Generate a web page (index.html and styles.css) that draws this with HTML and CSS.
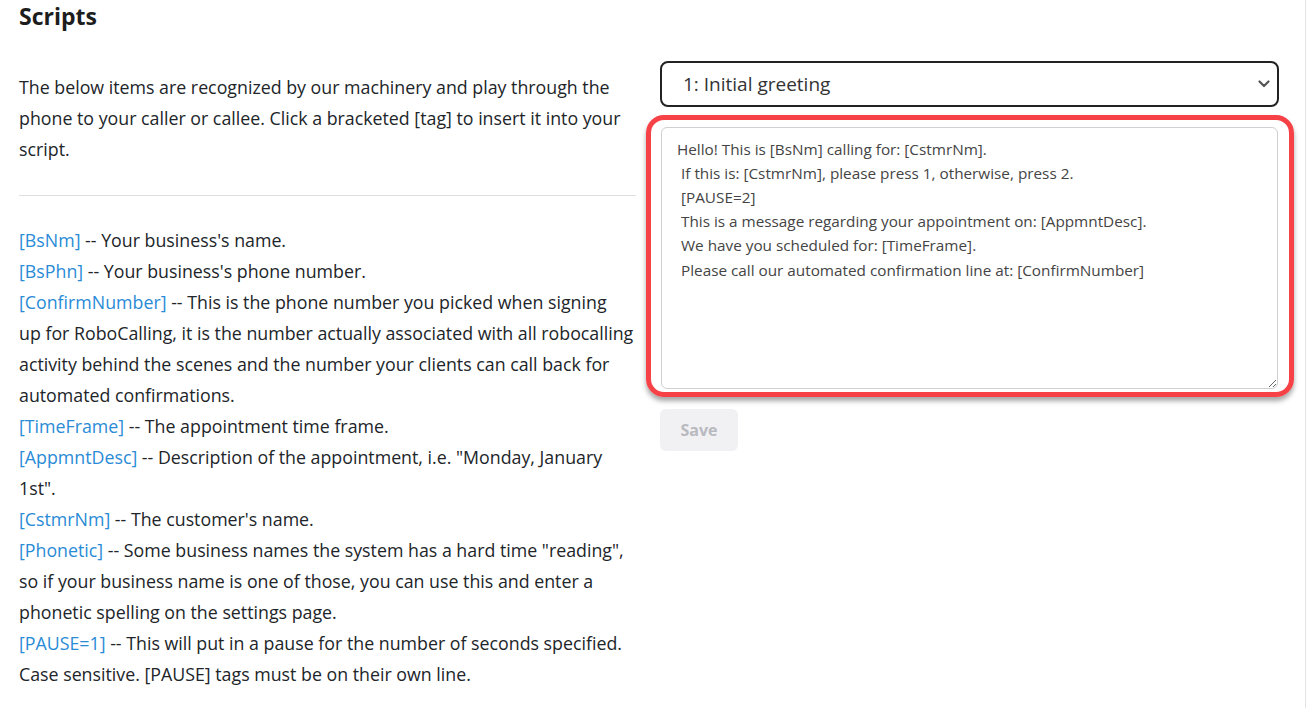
FILE: index.html
```html
<!DOCTYPE html>
<html lang="en">

<head>
    <meta charset="UTF-8">
    <meta name="viewport" content="width=device-width, initial-scale=1.0">
    <title>Scripts</title>
    <link rel="stylesheet" href="styles.css">
</head>

<body>
    <div class="page">
        <h2 class="page-title">Scripts</h2>

        <div class="row">
            <div class="col">
                <p class="intro">The below items are recognized by our machinery and play through the phone to your caller or callee. Click a bracketed [tag] to insert it into your script.</p>
                <hr>
                <ul class="tags">
                    <li><a href="#">[BsNm]</a> -- Your business's name.</li>
                    <li><a href="#">[BsPhn]</a> -- Your business's phone number.</li>
                    <li><a href="#">[ConfirmNumber]</a> -- This is the phone number you picked when signing up&nbsp;for RoboCalling, it is the number actually associated with all robocalling activity behind the scenes and the number your clients can call back for automated confirmations.</li>
                    <li><a href="#">[TimeFrame]</a> -- The appointment time frame.</li>
                    <li><a href="#">[AppmntDesc]</a> -- Description of the appointment, i.e. "Monday, January 1st".</li>
                    <li><a href="#">[CstmrNm]</a> -- The customer's name.</li>
                    <li><a href="#">[Phonetic]</a> -- Some business names the system has a hard time "reading", so if your business name is one of those, you can use this and enter a phonetic spelling on the settings page.</li>
                    <li><a href="#">[PAUSE=1]</a> -- This will put in a pause for the number of seconds specified. Case sensitive. [PAUSE] tags must be on their own line.</li>
                </ul>
            </div>

            <div class="col">
                <select id="scriptSelect">
                    <option>1: Initial greeting</option>
                    <option>2: Confirmed</option>
                    <option>3: Cancelled</option>
                </select>

                <div class="highlight">
                    <textarea id="scriptText">Hello! This is [BsNm] calling for: [CstmrNm].
 If this is: [CstmrNm], please press 1, otherwise, press 2.
 [PAUSE=2]
 This is a message regarding your appointment on: [AppmntDesc].
 We have you scheduled for: [TimeFrame].
 Please call our automated confirmation line at: [ConfirmNumber]</textarea>
                </div>

                <button class="save-btn" disabled>Save</button>
            </div>
        </div>
    </div>
</body>

</html>
```

FILE: styles.css
```css
html {
    height: 100%;
}

body {
    font-family: "Open Sans", sans-serif;
    font-size: 17.8px;
    line-height: 31px;
    color: #212529;
    background-color: #fff;
    margin: 0;
    min-height: 100%;
    border-right: 1px solid #e4e4e4;
    width: 1306px;
    box-sizing: border-box;
}

.page {
    padding: 0 0 0 19px;
    width: 1260px;
}

.page-title {
    font-size: 23px;
    font-weight: 700;
    line-height: 1.2;
    margin: 3px 0 0;
    color: #1d1d1d;
}

.row {
    display: grid;
    grid-template-columns: 617px 619px;
    column-gap: 24px;
    margin-top: 30px;
}

.intro {
    margin: 11px 0 0;
}

hr {
    border: 0;
    border-top: 1px solid #dedede;
    margin: 30px 0 29px;
}

.tags {
    list-style: none;
    margin: 0;
    padding: 0;
}

.tags a {
    color: #2a8bd6;
    text-decoration: none;
}

select {
    display: block;
    width: 100%;
    height: 46px;
    padding: 0 21px;
    font-family: "Open Sans", sans-serif;
    font-size: 19px;
    color: #333;
    background-color: #fff;
    border: 2px solid #222;
    border-radius: 8px;
    appearance: none;
    background-image: url("data:image/svg+xml,%3Csvg xmlns='http://www.w3.org/2000/svg' width='12' height='8' viewBox='0 0 12 8'%3E%3Cpath d='M1.5 1.5 6 6l4.5-4.5' fill='none' stroke='%23555' stroke-width='2.2' stroke-linecap='round' stroke-linejoin='round'/%3E%3C/svg%3E");
    background-repeat: no-repeat;
    background-position: right 7px center;
}

.highlight {
    margin: 8px -15px 0 -14px;
    padding: 7px 11px 3px 10px;
    border: 5px solid #f64247;
    border-radius: 18px;
    box-shadow: 0 4px 5px rgba(0, 0, 0, 0.35);
}

textarea {
    display: block;
    width: 100%;
    height: 262px;
    box-sizing: border-box;
    padding: 9px 15px;
    font-family: "Open Sans", sans-serif;
    font-size: 15.3px;
    line-height: 24.2px;
    color: #444;
    border: 1px solid #cfcfd4;
    border-radius: 6px;
    resize: vertical;
}

.save-btn {
    display: block;
    margin-top: 12px;
    width: 78px;
    height: 42px;
    font-family: "Open Sans", sans-serif;
    font-size: 16px;
    font-weight: 700;
    color: #b9b9c0;
    background-color: #f1f1f4;
    border: none;
    border-radius: 6px;
}
```
